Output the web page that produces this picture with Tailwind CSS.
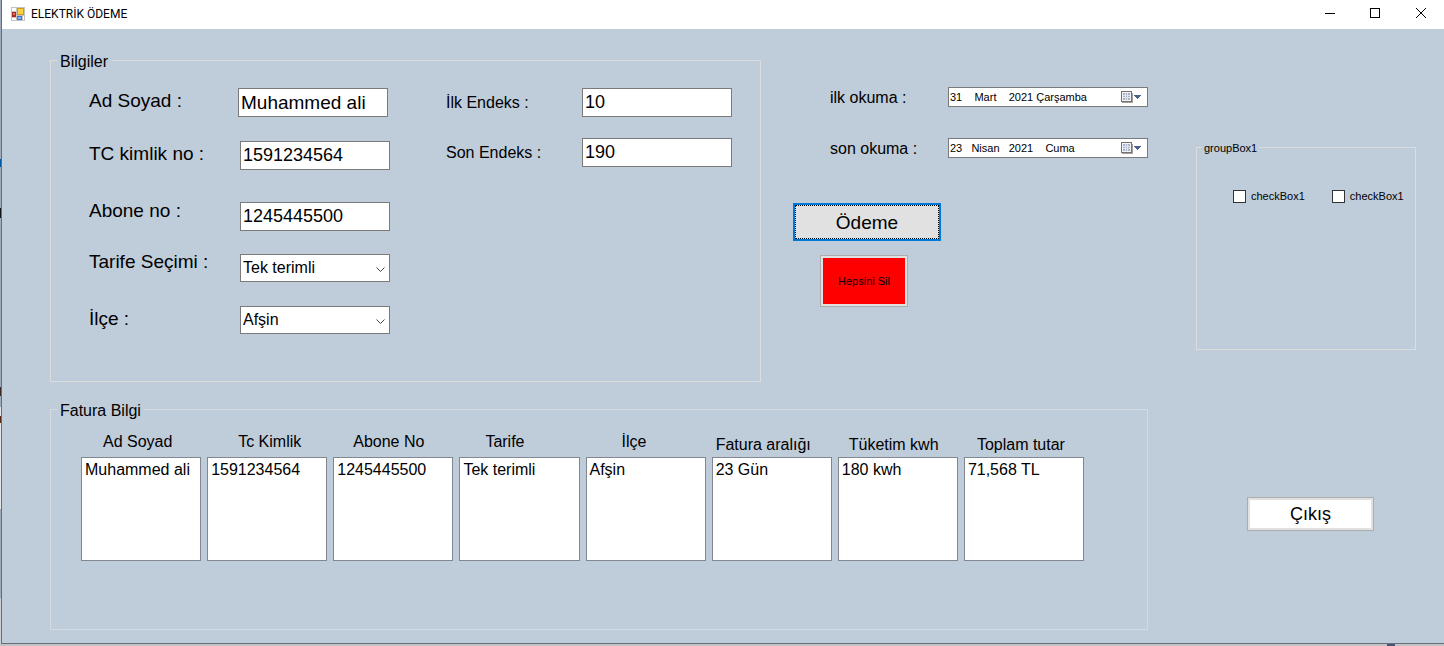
<!DOCTYPE html>
<html lang="tr">
<head>
<meta charset="utf-8">
<title>ELEKTRİK ÖDEME</title>
<script src="https://cdn.jsdelivr.net/npm/@tailwindcss/browser@4"></script>
</head>
<body class="flex min-h-screen flex-col bg-[#c3c1c1] font-['Liberation_Sans',Arial,sans-serif] text-base/[18px] text-black">
<div class="flex flex-1">
  <div class="flex w-px flex-col bg-[#9fabba]" aria-hidden="true">
    <span class="mt-[159px] h-2 bg-[#0055a5]"></span>
    <span class="mt-[41px] h-[10px] bg-[#10151c]"></span>
    <span class="mt-[169px] h-[9px] bg-[#3a2a22]"></span>
    <span class="mt-[11px] h-[9px] bg-[#e6e6e6]"></span>
    <span class="h-[7px] bg-[#5a2a10]"></span>
    <span class="h-[86px] bg-[#e6e6e6]"></span>
    <span class="mt-[89px] flex-1 bg-[#cdd0d3]"></span>
  </div>
  <div class="flex flex-1 flex-col border-b border-l border-[#646f7c] bg-[#bfccda]">
    <header class="flex h-[29px] items-center bg-white pl-[9px] pb-[2px]">
      <svg class="size-[14px]" viewBox="0 0 14 14" shape-rendering="crispEdges" aria-hidden="true">
        <rect width="14" height="14" fill="#c4c4c4"/>
        <path d="M1 1h4v3H1zM1 11h4v2H1zM12 9h1v4h-1z" fill="#fff"/>
        <rect x="1" y="5" width="4" height="5" fill="#b02a1c"/><rect x="2" y="6" width="2" height="2" fill="#e0705c"/>
        <rect x="6" y="1" width="7" height="7" fill="#d69a10"/><rect x="7" y="2" width="5" height="5" fill="#fbd23e"/>
        <rect x="6" y="9" width="5" height="4" fill="#3c78d0"/><rect x="7" y="10" width="3" height="2" fill="#8ab4f0"/>
      </svg>
      <h1 class="ml-[6px] flex-1 font-[Roboto,sans-serif] text-xs">ELEKTRİK ÖDEME</h1>
      <button type="button" aria-label="Simge durumuna küçült" class="flex w-[46px] justify-center"><svg class="size-[11px]" viewBox="0 0 11 11" shape-rendering="crispEdges"><path d="M0 5h10v1H0z"/></svg></button>
      <button type="button" aria-label="Ekranı kapla" class="flex w-[45px] justify-center"><svg class="size-[11px]" viewBox="0 0 11 11" shape-rendering="crispEdges"><path d="M.5 .5h9v9h-9z" fill="none" stroke="#000"/></svg></button>
      <button type="button" aria-label="Kapat" class="flex w-[46px] justify-center"><svg class="size-[11px]" viewBox="0 0 11 11"><path d="M0 0l10 10M10 0l-10 10" fill="none" stroke="#000"/></svg></button>
    </header>

    <main class="flex flex-1 gap-12 pl-12 pr-7">
      <div class="flex flex-1 flex-col gap-[18px] pt-[22px]">
        <div class="flex gap-8">
          <fieldset class="h-[331px] flex-1 border border-[#dcdcdc]">
            <legend class="ml-[6px] h-[18px] px-[3px] pt-[2px]">Bilgiler</legend>
            <div class="flex pl-[38px] pt-[19px]">
              <div class="flex w-[149px] flex-col items-start pt-px text-[19px]/[24px]">
                <label for="ad">Ad Soyad :</label>
                <label for="tc" class="mt-[29px]">TC kimlik no :</label>
                <label for="abone" class="mt-[33px]">Abone no :</label>
                <label for="tarife" class="mt-[27px]">Tarife Seçimi :</label>
                <label for="ilce" class="mt-[33px]">İlçe :</label>
              </div>
              <div class="flex w-[152px] flex-col items-end">
                <input id="ad" type="text" value="Muhammed ali" class="h-[29px] w-[150px] self-start border border-[#7a7a7a] bg-white px-[2px] text-[19px]">
                <input id="tc" type="text" value="1591234564" class="mt-6 h-[29px] w-[150px] border border-[#7a7a7a] bg-white px-[2px] text-lg">
                <input id="abone" type="text" value="1245445500" class="mt-8 h-[29px] w-[150px] border border-[#7a7a7a] bg-white px-[2px] text-lg">
                <div class="mt-[23px] grid h-[28px] w-[150px] items-center border border-[#7a7a7a] bg-white">
                  <select id="tarife" class="col-start-1 row-start-1 h-full appearance-none pl-[2px] text-base/[24px]"><option>Tek terimli</option></select>
                  <svg class="pointer-events-none col-start-1 row-start-1 mr-1 mt-[2px] h-[5px] w-[9px] justify-self-end" viewBox="0 0 9 5"><path d="M.5 .5l4 4 4-4" fill="none" stroke="#444"/></svg>
                </div>
                <div class="mt-6 grid h-[28px] w-[150px] items-center border border-[#7a7a7a] bg-white">
                  <select id="ilce" class="col-start-1 row-start-1 h-full appearance-none pl-[2px] text-base/[24px]"><option>Afşin</option></select>
                  <svg class="pointer-events-none col-start-1 row-start-1 mr-1 mt-[2px] h-[5px] w-[9px] justify-self-end" viewBox="0 0 9 5"><path d="M.5 .5l4 4 4-4" fill="none" stroke="#444"/></svg>
                </div>
              </div>
              <div class="ml-14 flex flex-col gap-[21px]">
                <div class="flex h-[29px] items-center">
                  <label for="ilk" class="w-[136px]">İlk Endeks :</label>
                  <input id="ilk" type="text" value="10" class="h-[29px] w-[150px] border border-[#7a7a7a] bg-white px-[2px] text-lg">
                </div>
                <div class="flex h-[29px] items-center">
                  <label for="son" class="w-[136px]">Son Endeks :</label>
                  <input id="son" type="text" value="190" class="h-[29px] w-[150px] border border-[#7a7a7a] bg-white px-[2px] text-lg">
                </div>
              </div>
            </div>
          </fieldset>

          <div class="flex w-[355px] flex-col items-start pt-[36px]">
            <div class="flex w-full items-center pl-[37px]">
              <label for="ilkokuma" class="flex-1 pt-[2px]">ilk okuma :</label>
              <div class="flex h-[20px] w-[200px] items-center border border-[#7a7a7a] bg-white">
                <input id="ilkokuma" type="text" value="31    Mart    2021 Çarşamba" class="w-[171px] pl-px text-[11px]/[16px]">
                <button type="button" aria-label="Takvimi aç"><svg class="h-[12px] w-[22px]" viewBox="0 0 22 12" shape-rendering="crispEdges"><path d="M2 11h10V2h1v10H2z" fill="#a5a09c"/><path d="M1.500 .5h10v10h-10z" fill="#f2f4f8" stroke="#77706c"/><path d="M3 2h7v7H3z" fill="#aab3c8"/><path d="M3 4.500h7M3 6.500h7M5.500 2v7M7.500 2v7" stroke="#dfe4ee"/><path d="M14 4h7v1h-1v1h-1v1h-1v1h-1V7h-1V6h-1V5h-1z" fill="#47618c"/></svg></button>
              </div>
            </div>
            <div class="mt-[31px] flex w-full items-center pl-[37px]">
              <label for="sonokuma" class="flex-1 pt-[2px]">son okuma :</label>
              <div class="flex h-[20px] w-[200px] items-center border border-[#7a7a7a] bg-white">
                <input id="sonokuma" type="text" value="23   Nisan   2021    Cuma" class="w-[171px] pl-px text-[11px]/[16px]">
                <button type="button" aria-label="Takvimi aç"><svg class="h-[12px] w-[22px]" viewBox="0 0 22 12" shape-rendering="crispEdges"><path d="M2 11h10V2h1v10H2z" fill="#a5a09c"/><path d="M1.500 .5h10v10h-10z" fill="#f2f4f8" stroke="#77706c"/><path d="M3 2h7v7H3z" fill="#aab3c8"/><path d="M3 4.500h7M3 6.500h7M5.500 2v7M7.500 2v7" stroke="#dfe4ee"/><path d="M14 4h7v1h-1v1h-1v1h-1v1h-1V7h-1V6h-1V5h-1z" fill="#47618c"/></svg></button>
              </div>
            </div>
            <button type="button" class="mt-[45px] h-[38px] w-[148px] border-2 border-[#0078d7] bg-[#e1e1e1] pt-[2px] text-[19px] outline-1 outline-dotted outline-black -outline-offset-3">Ödeme</button>
            <button type="button" class="ml-[27px] mt-[14px] h-[52px] w-[88px] border border-[#adadad] bg-[#e1e1e1] p-[2px] text-[11px]"><span class="grid h-full place-items-center bg-[#ff0000]">Hepsini Sil</span></button>
          </div>
        </div>

        <fieldset class="h-[230px] border border-[#d3dae2]">
          <legend class="ml-[6px] h-[18px] px-[3px] pt-[2px]">Fatura Bilgi</legend>
          <div class="ml-[30px] grid w-[1003px] grid-cols-8 gap-[6px] pt-[15px]">
            <div><label for="l1" class="block h-6 pl-[22px]">Ad Soyad</label><select id="l1" size="5" class="block h-[104px] w-full appearance-none overflow-hidden border border-[#828790] bg-white pt-[3px]"><option class="p-0 pl-[3px]">Muhammed ali</option></select></div>
            <div><label for="l2" class="block h-6 pl-[31px]">Tc Kimlik</label><select id="l2" size="5" class="block h-[104px] w-full appearance-none overflow-hidden border border-[#828790] bg-white pt-[3px]"><option class="p-0 pl-[3px]">1591234564</option></select></div>
            <div><label for="l3" class="block h-6 pl-5">Abone No</label><select id="l3" size="5" class="block h-[104px] w-full appearance-none overflow-hidden border border-[#828790] bg-white pt-[3px]"><option class="p-0 pl-[3px]">1245445500</option></select></div>
            <div><label for="l4" class="block h-6 pl-[26px]">Tarife</label><select id="l4" size="5" class="block h-[104px] w-full appearance-none overflow-hidden border border-[#828790] bg-white pt-[3px]"><option class="p-0 pl-[3px]">Tek terimli</option></select></div>
            <div><label for="l5" class="block h-6 pl-9">İlçe</label><select id="l5" size="5" class="block h-[104px] w-full appearance-none overflow-hidden border border-[#828790] bg-white pt-[3px]"><option class="p-0 pl-[3px]">Afşin</option></select></div>
            <div><label for="l6" class="block h-6 pl-1 pt-[3px]">Fatura aralığı</label><select id="l6" size="5" class="block h-[104px] w-full appearance-none overflow-hidden border border-[#828790] bg-white pt-[3px]"><option class="p-0 pl-[3px]">23 Gün</option></select></div>
            <div><label for="l7" class="block h-6 pl-[11px] pt-[3px]">Tüketim kwh</label><select id="l7" size="5" class="block h-[104px] w-full appearance-none overflow-hidden border border-[#828790] bg-white pt-[3px]"><option class="p-0 pl-[3px]">180 kwh</option></select></div>
            <div><label for="l8" class="block h-6 pl-[13px] pt-[3px]">Toplam tutar</label><select id="l8" size="5" class="block h-[104px] w-full appearance-none overflow-hidden border border-[#828790] bg-white pt-[3px]"><option class="p-0 pl-[3px]">71,568 TL</option></select></div>
          </div>
        </fieldset>
      </div>

      <div class="w-[220px] pt-[111px]">
        <fieldset class="h-[210px] border border-[#dcdcdc] text-[11px]/[14px]">
          <legend class="ml-[5px] h-[14px] px-[2px] pt-px">groupBox1</legend>
          <div class="flex gap-[27px] pl-9 pt-[35px]">
            <label class="flex items-center gap-[5px]"><input type="checkbox" class="size-[13px] appearance-none border border-[#333] bg-white checked:bg-[#333]">checkBox1</label>
            <label class="flex items-center gap-[5px]"><input type="checkbox" class="size-[13px] appearance-none border border-[#333] bg-white checked:bg-[#333]">checkBox1</label>
          </div>
        </fieldset>
        <button type="button" class="ml-[51px] mt-[147px] h-[34px] w-[127px] border border-[#adadad] bg-[#e1e1e1] p-[2px] text-lg"><span class="grid h-full place-items-center bg-white">Çıkış</span></button>
      </div>
    </main>
  </div>
</div>
<div class="flex h-[2px] justify-end pr-[49px]" aria-hidden="true"><span class="w-2 bg-[#4a5275]"></span></div>
</body>
</html>
